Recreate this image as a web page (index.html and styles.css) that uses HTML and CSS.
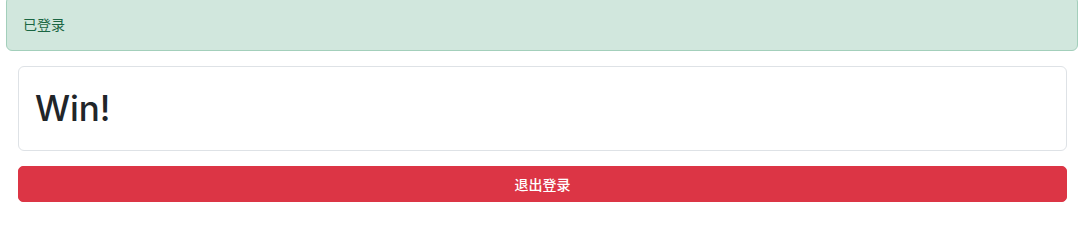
FILE: index.html
```html
<!DOCTYPE html>
<html lang="zh-CN">
<head>
<meta charset="utf-8">
<title>已登录</title>
<link rel="stylesheet" href="styles.css">
</head>
<body>
  <div class="alert">已登录</div>
  <main class="content">
    <div class="card">
      <h1 class="title">Win!</h1>
    </div>
    <button class="btn-logout" type="button">退出登录</button>
  </main>
</body>
</html>
```

FILE: styles.css
```css
html, body {
  margin: 0;
  padding: 0;
  background: #ffffff;
}
body {
  font-family: Inter, "Noto Sans CJK SC", "Noto Sans", sans-serif;
  color: #212529;
  font-size: 14px;
}
.alert {
  margin: -4px 2px 0 6px;
  padding: 17px 16px 15px 16px;
  background: #d1e7dd;
  border: 1px solid #a3cfbb;
  border-radius: 6px;
  color: #1a6643;
  font-size: 14px;
  line-height: 21px;
}
.content {
  display: flex;
  flex-direction: column;
  gap: 15px;
  padding: 15px 13px 0 18px;
}
.card {
  border: 1px solid #dee2e6;
  border-radius: 6px;
  padding: 16px 16px;
  background: #fff;
}
.title {
  margin: 0;
  font-weight: 500;
  font-size: 35px;
  line-height: 51px;
  color: #212529;
  letter-spacing: -0.1px;
}
.btn-logout {
  display: block;
  width: 100%;
  height: 36px;
  border: 1px solid #dc3545;
  border-radius: 5px;
  background: #dc3545;
  color: #ffffff;
  font-family: Inter, "Noto Sans CJK SC", sans-serif;
  font-size: 14px;
  font-weight: 500;
  padding: 0;
}
```
